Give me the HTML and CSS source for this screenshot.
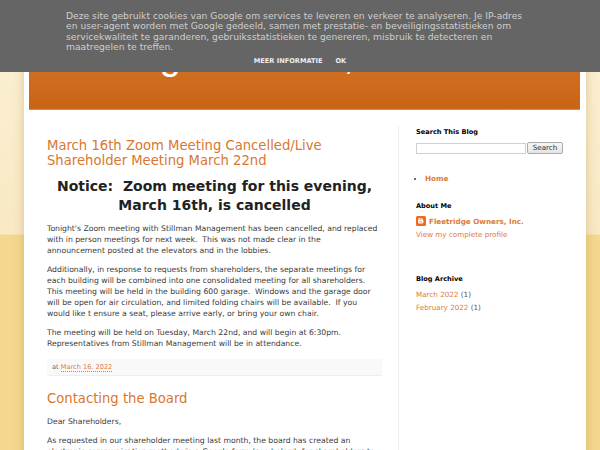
FILE: index.html
```html
<!DOCTYPE html>
<html lang="nl">
<head>
  <meta charset="UTF-8">
  <meta name="viewport" content="width=device-width, initial-scale=1.0">
  <title>Fleetridge Owners, Inc.</title>
  <link rel="stylesheet" href="styles.css">
</head>
<body>
  <div class="cookie-bar">
    <p class="cookie-text">Deze site gebruikt cookies van Google om services te leveren en verkeer te analyseren. Je IP-adres en user-agent worden met Google gedeeld, samen met prestatie- en beveiligingsstatistieken om servicekwaliteit te garanderen, gebruiksstatistieken te genereren, misbruik te detecteren en maatregelen te treffen.</p>
    <div class="cookie-actions">
      <a href="#">Meer informatie</a>
      <a href="#">OK</a>
    </div>
  </div>

  <div class="content-outer">
    <header class="blog-header">
      <h1 class="blog-title">Fleetridge Owners, Inc.</h1>
    </header>

    <div class="columns">
      <main class="main-col">
        <article class="post">
          <h3 class="post-title">March 16th Zoom Meeting Cancelled/Live Shareholder Meeting March 22nd</h3>
          <div class="post-body">
            <h2 class="notice">Notice:&nbsp; Zoom meeting for this evening, March 16th, is cancelled</h2>
            <p>Tonight's Zoom meeting with Stillman Management has been cancelled, and replaced with in person meetings for next week.&nbsp; This was not made clear in the announcement posted at the elevators and in the lobbies.</p>
            <p>Additionally, in response to requests from shareholders, the separate meetings for each building will be combined into one consolidated meeting for all shareholders.&nbsp; This meeting will be held in the building 600 garage.&nbsp; Windows and the garage door will be open for air circulation, and limited folding chairs will be available.&nbsp; If you would like t ensure a seat, please arrive early, or bring your own chair.</p>
            <p>The meeting will be held on Tuesday, March 22nd, and will begin at 6:30pm.&nbsp; Representatives from Stillman Management will be in attendance.</p>
          </div>
          <div class="post-footer">at <a href="#">March 16, 2022</a></div>
        </article>

        <article class="post">
          <h3 class="post-title">Contacting the Board</h3>
          <div class="post-body">
            <p>Dear Shareholders,</p>
            <p>As requested in our shareholder meeting last month, the board has created an electronic communication method via a Google form (see below), for shareholders to submit questions and concerns directly to the board.</p>
          </div>
        </article>
      </main>

      <aside class="sidebar">
        <section class="widget">
          <h2 class="widget-title">Search This Blog</h2>
          <form class="search-form">
            <input class="search-input" type="text">
            <button class="search-button" type="button">Search</button>
          </form>
        </section>

        <section class="widget pages-widget">
          <ul class="pages">
            <li><a href="#">Home</a></li>
          </ul>
        </section>

        <section class="widget">
          <h2 class="widget-title">About Me</h2>
          <div class="profile-name">
            <svg class="blogger-icon" width="10" height="10" viewBox="0 0 10 10">
              <rect width="10" height="10" rx="1.5" fill="#f06a1c"/>
              <path d="M3 2.2h2.2c.9 0 1.5.5 1.5 1.3v.5h.2c.4 0 .6.3.6.6v1.2c0 1-.7 1.8-1.7 1.8H3.2C2.5 7.6 2.2 7.2 2.2 6.6V3c0-.5.3-.8.8-.8z" fill="#fff"/>
              <rect x="3.4" y="3.3" width="1.9" height=".8" rx=".4" fill="#f06a1c"/>
              <rect x="3.4" y="5.5" width="3" height=".8" rx=".4" fill="#f06a1c"/>
            </svg>
            <a href="#">Fleetridge Owners, Inc.</a>
          </div>
          <a class="profile-link" href="#">View my complete profile</a>
        </section>

        <section class="widget archive">
          <h2 class="widget-title">Blog Archive</h2>
          <ul class="archive-list">
            <li><a href="#">March 2022</a> (1)</li>
            <li><a href="#">February 2022</a> (1)</li>
          </ul>
        </section>
      </aside>
    </div>
  </div>
</body>
</html>
```

FILE: styles.css
```css
:root {
  --link-color: #dd7b3a;
  --title-color: #d8772f;
  --text-color: #3a3a3a;
}
body {
  margin: 0;
  padding: 0;
  background: linear-gradient(to bottom, #fcf1d7 0, #f9e9c4 234px, #f4d88f 235px, #f4d88f 100%);
  background-color: #f4d88f;
  min-height: 450px;
  font-family: 'DejaVu Sans', sans-serif;
  font-size: 7.2px;
  color: var(--text-color);
  overflow: hidden;
}
a {
  color: var(--link-color);
  text-decoration: none;
}

/* cookie notice over the top of the page */
.cookie-bar {
  position: fixed;
  top: 0;
  left: 0;
  right: 0;
  height: 72px;
  background-color: #656565;
  z-index: 10;
  box-sizing: border-box;
  padding-top: 11px;
}
.cookie-text {
  width: 468px;
  margin: 0 auto;
  font-size: 9.2px;
  line-height: 10.3px;
  color: #cfcfcf;
}
.cookie-actions {
  display: flex;
  justify-content: center;
  gap: 13px;
  margin-top: 4px;
  line-height: 10px;
}
.cookie-actions a {
  color: #eee;
  font-weight: bold;
  font-size: 6.6px;
  text-transform: uppercase;
}

/* white page */
.content-outer {
  width: 562px;
  margin-left: 24px;
  min-height: 450px;
  background-color: #fff;
  box-shadow: 0 0 10px rgba(160, 120, 40, 0.35);
  padding-top: 28px;
  box-sizing: border-box;
}
.blog-header {
  margin: 0 6px 0 5px;
  height: 82px;
  background: linear-gradient(to bottom, #d9792c, #c96416);
  border-bottom: 1px solid #e38d4d;
  box-sizing: border-box;
  padding: 8px 4px;
}
.blog-title {
  margin: 0;
  font-family: 'Liberation Sans', sans-serif;
  font-weight: normal;
  font-size: 38px;
  line-height: 40px;
  color: #fff;
}

.columns {
  display: grid;
  grid-template-columns: 335px 1fr;
  column-gap: 16px;
  padding: 16px 24px 0 23px;
}

/* posts */
.post-title {
  margin: 12px 0 9px;
  font-size: 13.2px;
  line-height: 15px;
  font-weight: normal;
  color: var(--title-color);
}
.notice {
  margin: 0 0 8px;
  text-align: center;
  font-size: 14px;
  line-height: 19px;
  color: #222;
}
.post-body p {
  margin: 0 3px 7.5px 0;
  font-size: 7.7px;
  line-height: 11.1px;
}
.post-footer {
  margin: 10px 0 15px;
  padding: 4px 5px;
  background-color: #f9f9f9;
  border-bottom: 1px solid #eee;
  font-size: 6.6px;
  line-height: 8px;
  color: #666;
}
.post-footer a {
  color: #dd7b3a;
  border-bottom: 1px dotted #dd7b3a;
}
.post + .post .post-title {
  margin-top: 0;
  margin-bottom: 10px;
}

/* sidebar */
.sidebar {
  border-left: 1px solid #eee;
  padding-left: 17px;
  padding-top: 2px;
}
.widget {
  margin-bottom: 16px;
}
.widget-title {
  margin: 0 0 6px;
  font-size: 6.6px;
  line-height: 8px;
  color: #000;
}
.search-form {
  display: flex;
  align-items: center;
  gap: 1px;
}
.search-input {
  width: 110px;
  height: 11px;
  margin: 0;
  padding: 0;
  border: 1px solid #d0d0d0;
  box-sizing: border-box;
}
.search-button {
  width: 36px;
  height: 12px;
  margin: 0;
  padding: 0;
  font-family: 'DejaVu Sans', sans-serif;
  font-size: 7.2px;
  line-height: 10px;
  color: #333;
  background: linear-gradient(to bottom, #f6f6f6, #e4e4e4);
  border: 1px solid #aaa;
  border-radius: 2px;
}
.pages-widget {
  margin-bottom: 18px;
}
.pages {
  margin: 20px 0 0;
  padding-left: 9px;
  line-height: 10px;
}
.pages a {
  font-weight: bold;
}
.profile-name {
  display: flex;
  align-items: center;
  gap: 3px;
  margin-bottom: 4px;
}
.profile-name a {
  font-weight: bold;
}
.profile-link {
  display: block;
}
.archive {
  margin-top: 36px;
}
.archive-list {
  margin: 0;
  padding: 0;
  list-style: none;
  line-height: 12.5px;
  color: #555;
}
```
